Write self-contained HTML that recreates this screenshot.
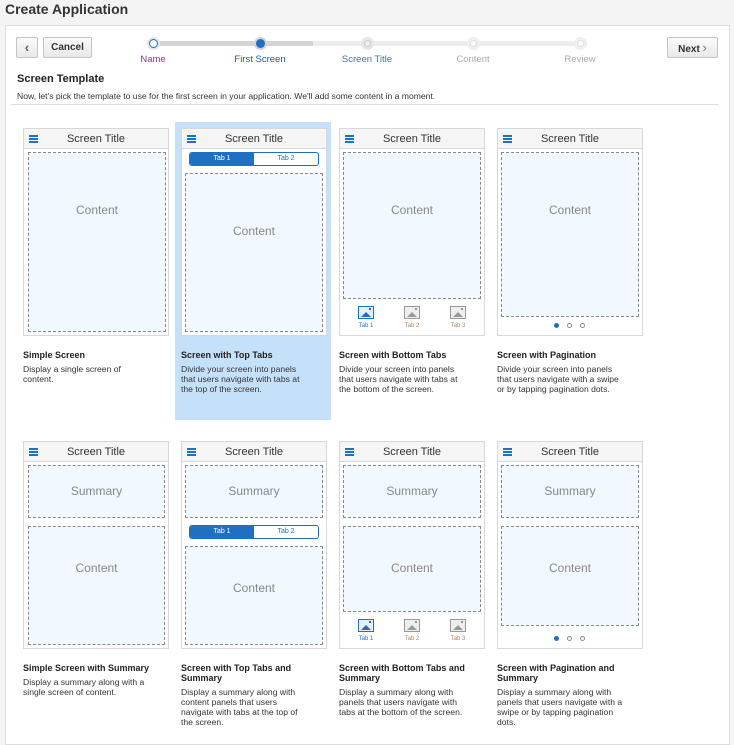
<!DOCTYPE html>
<html><head><meta charset="utf-8"><style>
*{margin:0;padding:0;box-sizing:border-box}
body{width:734px;height:736px;overflow:hidden;background:#f4f4f4;font-family:"Liberation Sans",Arial,sans-serif;position:relative;color:#333}
.a{position:absolute}
.panel{left:5px;top:25px;width:725px;height:720px;background:#fff;border:1px solid #ddd}
.btn{background:linear-gradient(#fafafa,#e9e9e9);border:1px solid #c4c4c4;border-radius:2px;font-size:10px;font-weight:bold;color:#333;text-align:center;line-height:20px}
.dot{width:13px;height:13px;border-radius:50%;background:#e6e6e6}
.dot i{position:absolute;left:3px;top:3px;width:7px;height:7px;border-radius:50%;border:1px solid #ccc;background:#eee}
.lbl{font-size:9.5px;top:54px;width:100px;text-align:center}
.ph{width:146px;height:208px;border:1px solid #d7d7d7;background:#fff}
.hd{left:0;top:0;width:144px;height:20px;background:#f5f5f5;border-bottom:1px solid #d7d7d7;font-size:11px;text-align:center;line-height:20px;color:#333}
.hm{left:5px;top:6px;width:9px;height:8px;border-top:2px solid #1f6fc2;border-bottom:2px solid #1f6fc2}
.hm:after{content:"";position:absolute;left:0;top:1px;width:9px;height:2px;background:#1f6fc2}
.db{border:1px dashed #888;background:#f1f8ff;text-align:center;color:#888;font-size:12px}
.tabs{height:14px;border:1px solid #1f6fc2;border-radius:3px;display:flex;font-size:7px;line-height:12px;overflow:hidden}
.tabs span{flex:1;text-align:center;color:#1f6fc2}
.tabs span:first-child{background:#1f6fc2;color:#fff}
.ic{width:16px;height:13px;border:1.5px solid #999;background:#eee}
.ic.on{border-color:#1f6fc2;background:#e6f0fa}
.ic:before{content:"";position:absolute;right:2px;top:1px;width:2px;height:2px;background:#999}
.ic.on:before{background:#1f6fc2}
.ic:after{content:"";position:absolute;left:2px;bottom:1px;border-left:5px solid transparent;border-right:5px solid transparent;border-bottom:5px solid #999}
.ic.on:after{border-bottom-color:#1f6fc2}
.tl{font-size:6px;color:#999;width:30px;text-align:center}
.pd{width:5px;height:5px;border-radius:50%;border:1px solid #888}
.t{font-size:9px;font-weight:bold;color:#222;width:140px;line-height:10px}
.d{font-size:8.6px;color:#333;width:140px;line-height:10px}
</style></head><body>
<div class="a" style="left:5px;top:1px;font-size:14px;font-weight:bold;color:#333">Create Application</div>
<div class="a panel"></div>
<div class="a btn" style="left:16px;top:37px;width:22px;height:21px;font-size:14px;color:#666;line-height:18px">&#8249;</div>
<div class="a btn" style="left:43px;top:37px;width:49px;height:21px">Cancel</div>
<div class="a btn" style="left:667px;top:37px;width:51px;height:21px">Next <span style="color:#777;font-size:13px;font-weight:normal">&#8250;</span></div>
<div class="a" style="left:153px;top:41px;width:160px;height:5px;background:#d4d4d4"></div>
<div class="a" style="left:313px;top:41px;width:267px;height:5px;background:#ececec"></div>
<div class="a dot" style="left:147px;top:37px"><i style="border:1.5px solid #1f6fc2;background:#fff;left:2px;top:2px;width:9px;height:9px"></i></div>
<div class="a dot" style="left:254px;top:37px;background:#d4d4d4"><i style="border:0;background:#1f6fc2;left:2px;top:2px;width:9px;height:9px"></i></div>
<div class="a dot" style="left:361px;top:37px"><i></i></div>
<div class="a dot" style="left:467px;top:37px;background:#efefef"><i style="background:#fff;border-color:#ddd"></i></div>
<div class="a dot" style="left:574px;top:37px;background:#efefef"><i style="background:#fff;border-color:#ddd"></i></div>
<div class="a lbl" style="left:103px;color:#7a3b8f">Name</div>
<div class="a lbl" style="left:210px;color:#1f5aa0">First Screen</div>
<div class="a lbl" style="left:317px;color:#4a6f9a">Screen Title</div>
<div class="a lbl" style="left:423px;color:#aaa">Content</div>
<div class="a lbl" style="left:530px;color:#aaa">Review</div>
<div class="a" style="left:17px;top:73px;font-size:11px;font-weight:bold;color:#222">Screen Template</div>
<div class="a" style="left:17px;top:91px;font-size:8.6px;color:#333">Now, let's pick the template to use for the first screen in your application. We'll add some content in a moment.</div>
<div class="a" style="left:11px;top:104px;width:708px;height:1px;background:#ddd"></div>
<div class="a" style="left:175px;top:122px;width:156px;height:298px;background:#c5e1fa"></div>

<!-- Row 1 -->
<div class="a ph" style="left:23px;top:128px"><div class="a hd">Screen Title</div><div class="a hm"></div>
<div class="a db" style="left:4px;top:23px;width:138px;height:180px;padding-top:50px">Content</div></div>

<div class="a ph" style="left:181px;top:128px"><div class="a hd">Screen Title</div><div class="a hm"></div>
<div class="a tabs" style="left:7px;top:23px;width:130px"><span>Tab 1</span><span>Tab 2</span></div>
<div class="a db" style="left:3px;top:44px;width:138px;height:159px;padding-top:50px">Content</div></div>

<div class="a ph" style="left:339px;top:128px"><div class="a hd">Screen Title</div><div class="a hm"></div>
<div class="a db" style="left:3px;top:23px;width:138px;height:147px;padding-top:50px">Content</div>
<div class="a ic on" style="left:18px;top:177px"></div><div class="a ic" style="left:64px;top:177px"></div><div class="a ic" style="left:110px;top:177px"></div>
<div class="a tl" style="left:11px;top:194px;color:#1f6fc2">Tab 1</div><div class="a tl" style="left:57px;top:194px;color:#b08060">Tab 2</div><div class="a tl" style="left:103px;top:194px;color:#b08060">Tab 3</div></div>

<div class="a ph" style="left:497px;top:128px"><div class="a hd">Screen Title</div><div class="a hm"></div>
<div class="a db" style="left:3px;top:23px;width:138px;height:165px;padding-top:50px">Content</div>
<div class="a pd" style="left:56px;top:194px;background:#1f6fc2;border-color:#1f6fc2"></div><div class="a pd" style="left:69px;top:194px"></div><div class="a pd" style="left:82px;top:194px"></div></div>

<div class="a t" style="left:23px;top:350px">Simple Screen</div>
<div class="a d" style="left:23px;top:364px">Display a single screen of<br>content.</div>
<div class="a t" style="left:181px;top:350px">Screen with Top Tabs</div>
<div class="a d" style="left:181px;top:364px">Divide your screen into panels<br>that users navigate with tabs at<br>the top of the screen.</div>
<div class="a t" style="left:339px;top:350px">Screen with Bottom Tabs</div>
<div class="a d" style="left:339px;top:364px">Divide your screen into panels<br>that users navigate with tabs at<br>the bottom of the screen.</div>
<div class="a t" style="left:497px;top:350px">Screen with Pagination</div>
<div class="a d" style="left:497px;top:364px">Divide your screen into panels<br>that users navigate with a swipe<br>or by tapping pagination dots.</div>

<!-- Row 2 -->
<div class="a ph" style="left:23px;top:441px"><div class="a hd">Screen Title</div><div class="a hm"></div>
<div class="a db" style="left:4px;top:23px;width:137px;height:53px;padding-top:18px">Summary</div>
<div class="a db" style="left:4px;top:84px;width:137px;height:119px;padding-top:34px">Content</div></div>

<div class="a ph" style="left:181px;top:441px"><div class="a hd">Screen Title</div><div class="a hm"></div>
<div class="a db" style="left:3px;top:23px;width:138px;height:53px;padding-top:18px">Summary</div>
<div class="a tabs" style="left:7px;top:83px;width:130px"><span>Tab 1</span><span>Tab 2</span></div>
<div class="a db" style="left:3px;top:104px;width:138px;height:99px;padding-top:34px">Content</div></div>

<div class="a ph" style="left:339px;top:441px"><div class="a hd">Screen Title</div><div class="a hm"></div>
<div class="a db" style="left:3px;top:23px;width:138px;height:53px;padding-top:18px">Summary</div>
<div class="a db" style="left:3px;top:84px;width:138px;height:86px;padding-top:34px">Content</div>
<div class="a ic on" style="left:18px;top:177px"></div><div class="a ic" style="left:64px;top:177px"></div><div class="a ic" style="left:110px;top:177px"></div>
<div class="a tl" style="left:11px;top:194px;color:#1f6fc2">Tab 1</div><div class="a tl" style="left:57px;top:194px;color:#b08060">Tab 2</div><div class="a tl" style="left:103px;top:194px;color:#b08060">Tab 3</div></div>

<div class="a ph" style="left:497px;top:441px"><div class="a hd">Screen Title</div><div class="a hm"></div>
<div class="a db" style="left:3px;top:23px;width:138px;height:53px;padding-top:18px">Summary</div>
<div class="a db" style="left:3px;top:84px;width:138px;height:100px;padding-top:34px">Content</div>
<div class="a pd" style="left:56px;top:194px;background:#1f6fc2;border-color:#1f6fc2"></div><div class="a pd" style="left:69px;top:194px"></div><div class="a pd" style="left:82px;top:194px"></div></div>

<div class="a t" style="left:23px;top:663px">Simple Screen with Summary</div>
<div class="a d" style="left:23px;top:677px">Display a summary along with a<br>single screen of content.</div>
<div class="a t" style="left:181px;top:663px">Screen with Top Tabs and<br>Summary</div>
<div class="a d" style="left:181px;top:687px">Display a summary along with<br>content panels that users<br>navigate with tabs at the top of<br>the screen.</div>
<div class="a t" style="left:339px;top:663px">Screen with Bottom Tabs and<br>Summary</div>
<div class="a d" style="left:339px;top:687px">Display a summary along with<br>panels that users navigate with<br>tabs at the bottom of the screen.</div>
<div class="a t" style="left:497px;top:663px">Screen with Pagination and<br>Summary</div>
<div class="a d" style="left:497px;top:687px">Display a summary along with<br>panels that users navigate with a<br>swipe or by tapping pagination<br>dots.</div>
</body></html>
